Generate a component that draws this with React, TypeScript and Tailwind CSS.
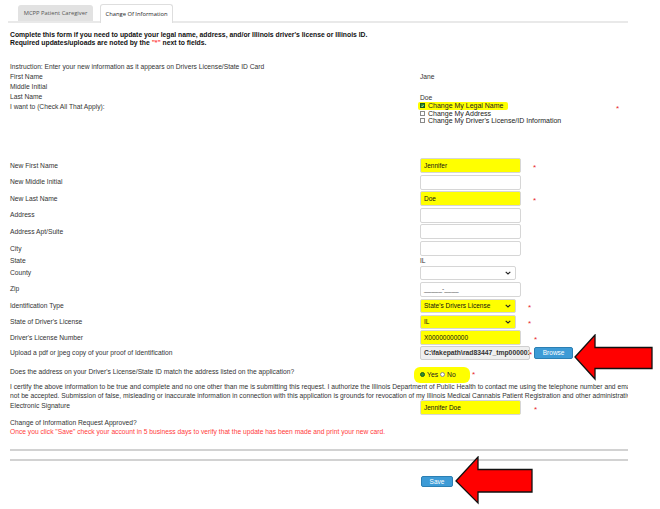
import React from "react";

type Children = { children?: React.ReactNode };

const Star = ({ className = "" }: { className?: string }) => (
  <span className={`text-[#e8262b] text-[8px] leading-none translate-y-[2px] ${className}`}>*</span>
);

const Field = ({ value = "", hl = false, muted = false }: { value?: string; hl?: boolean; muted?: boolean }) => (
  <div
    className={`flex h-[15px] w-[101px] items-center whitespace-nowrap rounded-[2px] border border-[#d6d6d6] px-[3px] text-[6.5px] ${
      muted ? "text-[#555]" : "text-[#111]"
    } ${hl ? "bg-[#ffff00]" : "bg-white"}`}
  >
    {value}
  </div>
);

const Select = ({ value = "", hl = false }: { value?: string; hl?: boolean }) => (
  <div
    className={`flex h-[14px] w-[96px] items-center justify-between rounded-[2px] border border-[#d6d6d6] pl-[3px] pr-[4px] text-[6.5px] text-[#111] ${
      hl ? "bg-[#ffff00]" : "bg-white"
    }`}
  >
    <span>{value}</span>
    <svg width="6" height="4" viewBox="0 0 6 4">
      <path d="M0.7 0.8 L3 3 L5.3 0.8" fill="none" stroke="#222" strokeWidth="1.1" />
    </svg>
  </div>
);

const Row = ({ label, h, children }: Children & { label: string; h: string }) => (
  <div className={`flex items-center ${h}`}>
    <div className="w-[410px] shrink-0 whitespace-nowrap">{label}</div>
    <div className="flex items-center">{children}</div>
  </div>
);

const Check = ({ on = false }: { on?: boolean }) => (
  <span
    className={`mr-[3px] inline-flex h-[5px] w-[5px] shrink-0 items-center justify-center border ${
      on ? "border-[#1c5a1c] bg-[#2f8f2f]" : "border-[#8a8a8a] bg-white"
    }`}
  >
    {on && (
      <svg width="4" height="4" viewBox="0 0 4 4">
        <path d="M0.6 2 L1.6 3 L3.4 0.8" fill="none" stroke="#fff" strokeWidth="0.8" />
      </svg>
    )}
  </span>
);

const Arrow = ({ className, w, h, points }: { className: string; w: number; h: number; points: string }) => (
  <svg className={className} width={w} height={h} viewBox={`0 0 ${w} ${h}`}>
    <polygon points={points} fill="#ff0000" stroke="#111" strokeWidth="1.3" strokeLinejoin="miter" />
  </svg>
);

export default function App() {
  return (
    <div className="h-[509px] w-[660px] overflow-hidden bg-white pt-[4px] font-['Liberation_Sans',Arial,sans-serif] text-[6.7px] text-[#333]">
      {/* tabs */}
      <div className="ml-[8px] flex w-[620px] items-end gap-[7px] border-b-2 border-[#e9e9e9] pl-[10px]">
        <div className="flex h-[16px] w-[75px] items-center justify-center rounded-t-[3px] bg-[#e2e2e2] font-['Open_Sans',sans-serif] text-[5.8px] text-[#555]">
          MCPP Patient Caregiver
        </div>
        <div className="-mb-[2px] flex h-[19px] w-[73px] items-center justify-center rounded-t-[3px] border border-b-0 border-[#dedede] bg-white font-['Open_Sans',sans-serif] text-[5.8px] text-[#222]">
          Change Of Information
        </div>
      </div>

      <div className="w-[628px] pl-[10px]">
        <div className="mt-[8px] text-[6.8px] font-bold leading-[8px] text-[#111]">
          <p>Complete this form if you need to update your legal name, address, and/or Illinois driver's license or Illinois ID.</p>
          <p>
            Required updates/uploads are noted by the <span className="text-[#ff4444]">"*"</span> next to fields.
          </p>
        </div>

        <div className="mt-[15px]">
          <Row label="Instruction: Enter your new information as it appears on Drivers License/State ID Card" h="h-[10px]" />
          <Row label="First Name" h="h-[10px]">
            <span>Jane</span>
          </Row>
          <Row label="Middle Initial" h="h-[10px]" />
          <Row label="Last Name" h="h-[10px]">
            <span className="translate-y-[1px]">Doe</span>
          </Row>
          <div className="flex">
            <div className="w-[410px] shrink-0 pt-[1px] leading-[8px]">I want to (Check All That Apply):</div>
            <div className="w-[140px] whitespace-nowrap text-[7px] leading-[7.6px] text-[#222]">
              <div className="-ml-[2px] flex w-[90px] items-center rounded-[2px] bg-[#ffff00] pl-[2px]">
                <Check on />
                Change My Legal Name
              </div>
              <div className="flex items-center">
                <Check />
                Change My Address
              </div>
              <div className="flex items-center">
                <Check />
                Change My Driver's License/ID Information
              </div>
            </div>
            <Star className="ml-[56px] mt-[1px]" />
          </div>
        </div>

        <div className="mt-[32.5px]">
          <Row label="New First Name" h="h-[16.6px]">
            <Field value="Jennifer" hl />
            <Star className="ml-[12px]" />
          </Row>
          <Row label="New Middle Initial" h="h-[16.6px]">
            <Field />
          </Row>
          <Row label="New Last Name" h="h-[16.6px]">
            <Field value="Doe" hl />
            <Star className="ml-[12px]" />
          </Row>
          <Row label="Address" h="h-[16.6px]">
            <Field />
          </Row>
          <Row label="Address Apt/Suite" h="h-[16.6px]">
            <Field />
          </Row>
          <Row label="City" h="h-[16.6px]">
            <Field />
          </Row>
          <Row label="State" h="h-[9px]">
            <span>IL</span>
          </Row>
          <Row label="County" h="h-[15px]">
            <Select />
          </Row>
          <Row label="Zip" h="h-[17px]">
            <Field value="_____-____" muted />
          </Row>
          <Row label="Identification Type" h="h-[17px]">
            <Select value="State's Drivers License" hl />
            <Star className="ml-[12px]" />
          </Row>
          <Row label="State of Driver's License" h="h-[15px]">
            <Select value="IL" hl />
            <Star className="ml-[12px]" />
          </Row>
          <Row label="Driver's License Number" h="h-[15.5px]">
            <Field value="X00000000000" hl />
            <Star className="ml-[13px]" />
          </Row>
          <div className="relative">
            <Row label="Upload a pdf or jpeg copy of your proof of Identification" h="h-[16px]">
              <div className="flex h-[14px] w-[110px] items-center overflow-hidden whitespace-nowrap rounded-[2px] border border-[#cfcfcf] bg-[#efefef] pl-[3px] text-[6.8px] font-bold text-[#333]">
                C:\fakepath\rad83447_tmp000001.pdf
              </div>
              <Star className="-ml-[1px]" />
              <button className="ml-[2px] h-[12px] w-[39px] rounded-[2px] border border-[#2b7fb3] bg-[#3d9bd6] text-[6.5px] text-white">
                Browse
              </button>
            </Row>
            <Arrow
              className="absolute left-[564px] top-[-11px]"
              w={80}
              h={47}
              points="1,23 21,1 21,13.5 78,13.5 78,34.5 21,34.5 21,45"
            />
          </div>
          <Row label="Does the address on your Driver's License/State ID match the address listed on the application?" h="h-[22px]">
            <div className="-ml-[6px] mt-[5px] flex h-[16px] w-[56px] items-center rounded-[6px] bg-[#ffff00] pl-[6px] text-[6.8px] text-[#222]">
              <span className="mr-[2px] h-[5px] w-[5px] rounded-full border border-[#1c5a1c] bg-[#2f8f2f]" />
              Yes
              <span className="ml-[2px] mr-[2px] h-[5px] w-[5px] rounded-full border border-[#8a8a8a] bg-white" />
              No
            </div>
            <Star className="ml-[2px] mt-[2px]" />
          </Row>
        </div>

        <div className="w-[618px] overflow-hidden whitespace-nowrap leading-[8.3px]">
          <p>
            I certify the above information to be true and complete and no one other than me is submitting this request. I authorize the Illinois
            Department of Public Health to contact me using the telephone number and email address provided. Incomplete applications will
          </p>
          <p>
            not be accepted. Submission of false, misleading or inaccurate information in connection with this application is grounds for revocation
            of my Illinois Medical Cannabis Patient Registration and other administrative action.
          </p>
        </div>
        <div className="flex h-[15.5px]">
          <div className="w-[410px] shrink-0 pt-[2px] leading-[8px]">Electronic Signature</div>
          <div className="flex items-center">
            <Field value="Jennifer Doe" hl />
            <Star className="ml-[13px]" />
          </div>
        </div>

        <div className="mt-[2.5px] leading-[9.5px]">
          <p>Change of Information Request Approved?</p>
          <p className="text-[#ff3b3b]">
            Once you click "Save" check your account in 5 business days to verify that the update has been made and print your new card.
          </p>
        </div>

        <div className="mt-[12px] border-t-2 border-[#d2d2d2]" />
        <div className="mt-[8px] border-t-2 border-[#d2d2d2]" />

        <div className="relative mt-[15.5px] flex h-[11px] pl-[411px]">
          <button className="h-[11px] w-[32px] rounded-[2px] border border-[#2b7fb3] bg-[#3d9bd6] text-[6.5px] text-white">Save</button>
          <Arrow
            className="absolute left-[445px] top-[-20px]"
            w={79}
            h={49}
            points="1,25 23,1 23,13.5 77,13.5 77,36 23,36 23,47"
          />
        </div>
      </div>
    </div>
  );
}
